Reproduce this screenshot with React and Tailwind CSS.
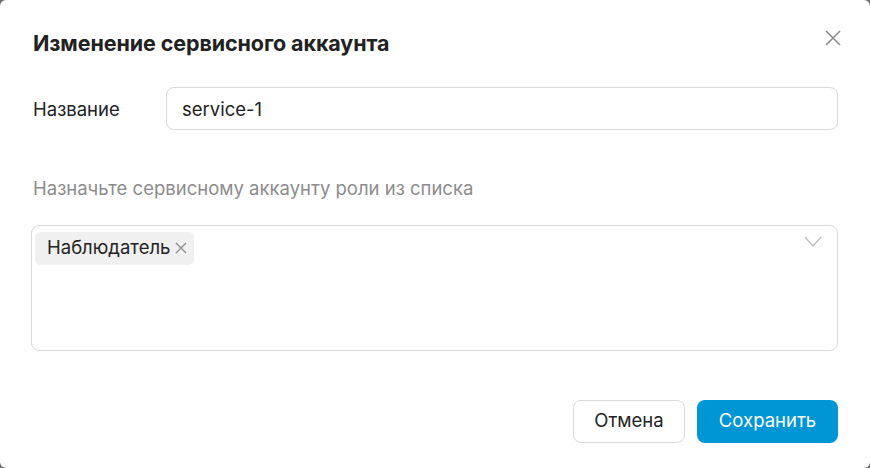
import React from "react";

export default function App() {
  return (
    <div className="w-[870px] h-[468px] bg-[#6b6b6b]" style={{ fontFamily: "Inter, 'Noto Sans', sans-serif" }}>
      <div className="w-full h-full bg-white rounded-[6px] flex flex-col px-[32px] pt-[28px] text-[#222]">
        <div className="flex items-start justify-between h-[32px]">
          <h1 className="text-[21.5px] font-bold leading-[31px] pl-[1px] tracking-[-0.1px]">Изменение сервисного аккаунта</h1>
          <button className="w-[16px] h-[16px] mt-[2px] mr-[-3px] flex items-center justify-center text-[#8c8c8c]">
            <svg width="16" height="16" viewBox="0 0 16 16" fill="none" stroke="currentColor" strokeWidth="1.6">
              <path d="M1 1L15 15M15 1L1 15" />
            </svg>
          </button>
        </div>
        <div className="flex items-center mt-[27px]">
          <label className="w-[134px] text-[18.5px] pl-[1px] pt-[2px]">Название</label>
          <div className="flex-1 h-[43px] border border-[#d9d9d9] rounded-[8px] flex items-center px-[15px] pt-[2px] text-[18.5px]">
            service-1
          </div>
        </div>
        <p className="mt-[45px] text-[18.5px] text-[#8c8c8c] pl-[1px]">Назначьте сервисному аккаунту роли из списка</p>
        <div className="mt-[22px] ml-[-1px] h-[126px] border border-[#d9d9d9] rounded-[8px] flex items-start justify-between pl-[3px] pt-[6px] pr-[15px]">
          <div className="h-[33px] bg-[#f0f0f0] rounded-[5px] flex items-center pl-[12px] pr-[7px] gap-[5px] text-[18.5px]">
            <span>Наблюдатель</span>
            <svg width="12" height="12" viewBox="0 0 12 12" fill="none" stroke="#8c8c8c" strokeWidth="1.3">
              <path d="M1 1L11 11M11 1L1 11" />
            </svg>
          </div>
          <svg className="mt-[4px]" width="18" height="11" viewBox="0 0 18 11" fill="none" stroke="#bdbdbd" strokeWidth="1.3">
            <path d="M1 1L9 10L17 1" />
          </svg>
        </div>
        <div className="mt-[49px] flex justify-end gap-[12px]">
          <button className="h-[43px] w-[112px] border border-[#d9d9d9] rounded-[8px] text-[18.5px] bg-white">Отмена</button>
          <button className="h-[43px] w-[141px] rounded-[8px] text-[18.5px] bg-[#0096d6] text-white">Сохранить</button>
        </div>
      </div>
    </div>
  );
}
